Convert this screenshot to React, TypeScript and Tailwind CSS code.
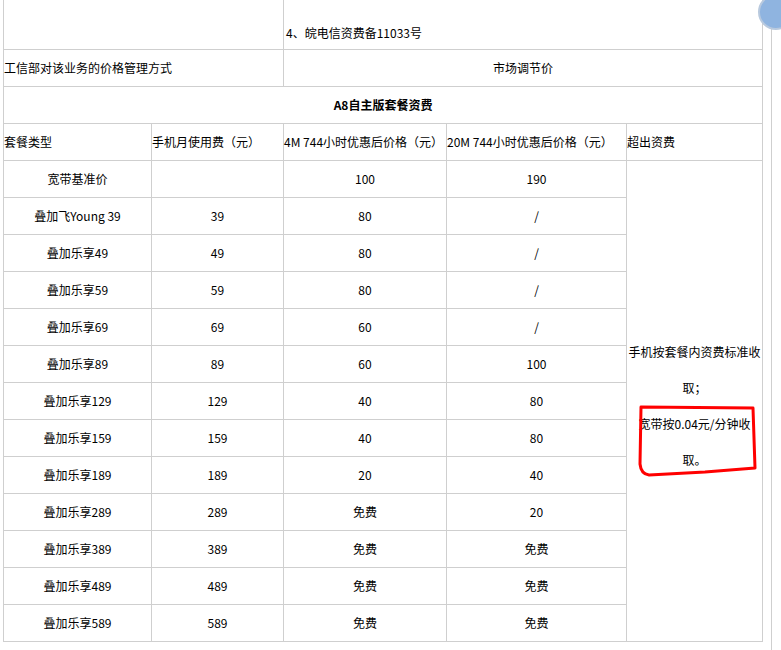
export default function App() {
  const rows: [string, string, string, string][] = [
    ['宽带基准价', '', '100', '190'],
    ['叠加飞Young 39', '39', '80', '/'],
    ['叠加乐享49', '49', '80', '/'],
    ['叠加乐享59', '59', '80', '/'],
    ['叠加乐享69', '69', '60', '/'],
    ['叠加乐享89', '89', '60', '100'],
    ['叠加乐享129', '129', '40', '80'],
    ['叠加乐享159', '159', '40', '80'],
    ['叠加乐享189', '189', '20', '40'],
    ['叠加乐享289', '289', '免费', '20'],
    ['叠加乐享389', '389', '免费', '免费'],
    ['叠加乐享489', '489', '免费', '免费'],
    ['叠加乐享589', '589', '免费', '免费'],
  ]
  const td = 'border border-[#cfcfcf] h-[37px] p-0'
  return (
    <div className="relative w-[781px] h-[650px] overflow-hidden bg-white text-[12px] text-black" style={{ fontFamily: '"Noto Sans CJK SC", sans-serif' }}>
      <div className="absolute left-[771px] top-0 h-full border-l border-[#cfcfcf]" />
      <div className="absolute left-[758px] top-[-6px] w-[36px] h-[36px] rounded-full border-2 border-[#b8c9de] bg-[#8fb4e0]" />
      <table className="ml-[3px] mt-[-21px] border-collapse table-fixed w-[759px]">
        <colgroup>
          <col className="w-[148px]" />
          <col className="w-[132px]" />
          <col className="w-[163px]" />
          <col className="w-[180px]" />
          <col className="w-[136px]" />
        </colgroup>
        <tbody>
          <tr>
            <td colSpan={2} className={td + ' h-[70px]'} />
            <td colSpan={3} className={td + ' h-[70px] align-top'}>
              <div className="pl-[20px] pt-[0px] leading-[20px] font-bold">3、皖电信资费备 ——</div>
              <div className="pl-[2px] pt-[23px] leading-[20px]">4、皖电信资费备11033号</div>
            </td>
          </tr>
          <tr>
            <td colSpan={2} className={td}>工信部对该业务的价格管理方式</td>
            <td colSpan={3} className={td + ' text-center'}>市场调节价</td>
          </tr>
          <tr>
            <td colSpan={5} className={td + ' text-center font-bold'}>A8自主版套餐资费</td>
          </tr>
          <tr>
            <td className={td}>套餐类型</td>
            <td className={td}>手机月使用费（元）</td>
            <td className={td + ' whitespace-nowrap'}>4M 744小时优惠后价格（元）</td>
            <td className={td + ' whitespace-nowrap'}>20M 744小时优惠后价格（元）</td>
            <td className={td}>超出资费</td>
          </tr>
          {rows.map((r, i) => (
            <tr key={i}>
              {r.map((c, j) => (
                <td key={j} className={td + ' text-center'}>{c}</td>
              ))}
              {i === 0 && (
                <td rowSpan={13} className={td + ' text-center'}>
                  <div className="relative leading-[36px] pt-[10px]">
                    手机按套餐内资费标准收取；<br />宽带按0.04元/分钟收取。
                    <svg className="absolute left-[8px] top-[80px]" width="122" height="74" viewBox="0 0 122 74">
                      <path d="M6 3 L118 4 L120 64 L70 68 L14 71 Q6 70 5 60 Z" fill="none" stroke="#f00" strokeWidth="3" strokeLinejoin="round" />
                    </svg>
                  </div>
                </td>
              )}
            </tr>
          ))}
        </tbody>
      </table>
    </div>
  )
}
